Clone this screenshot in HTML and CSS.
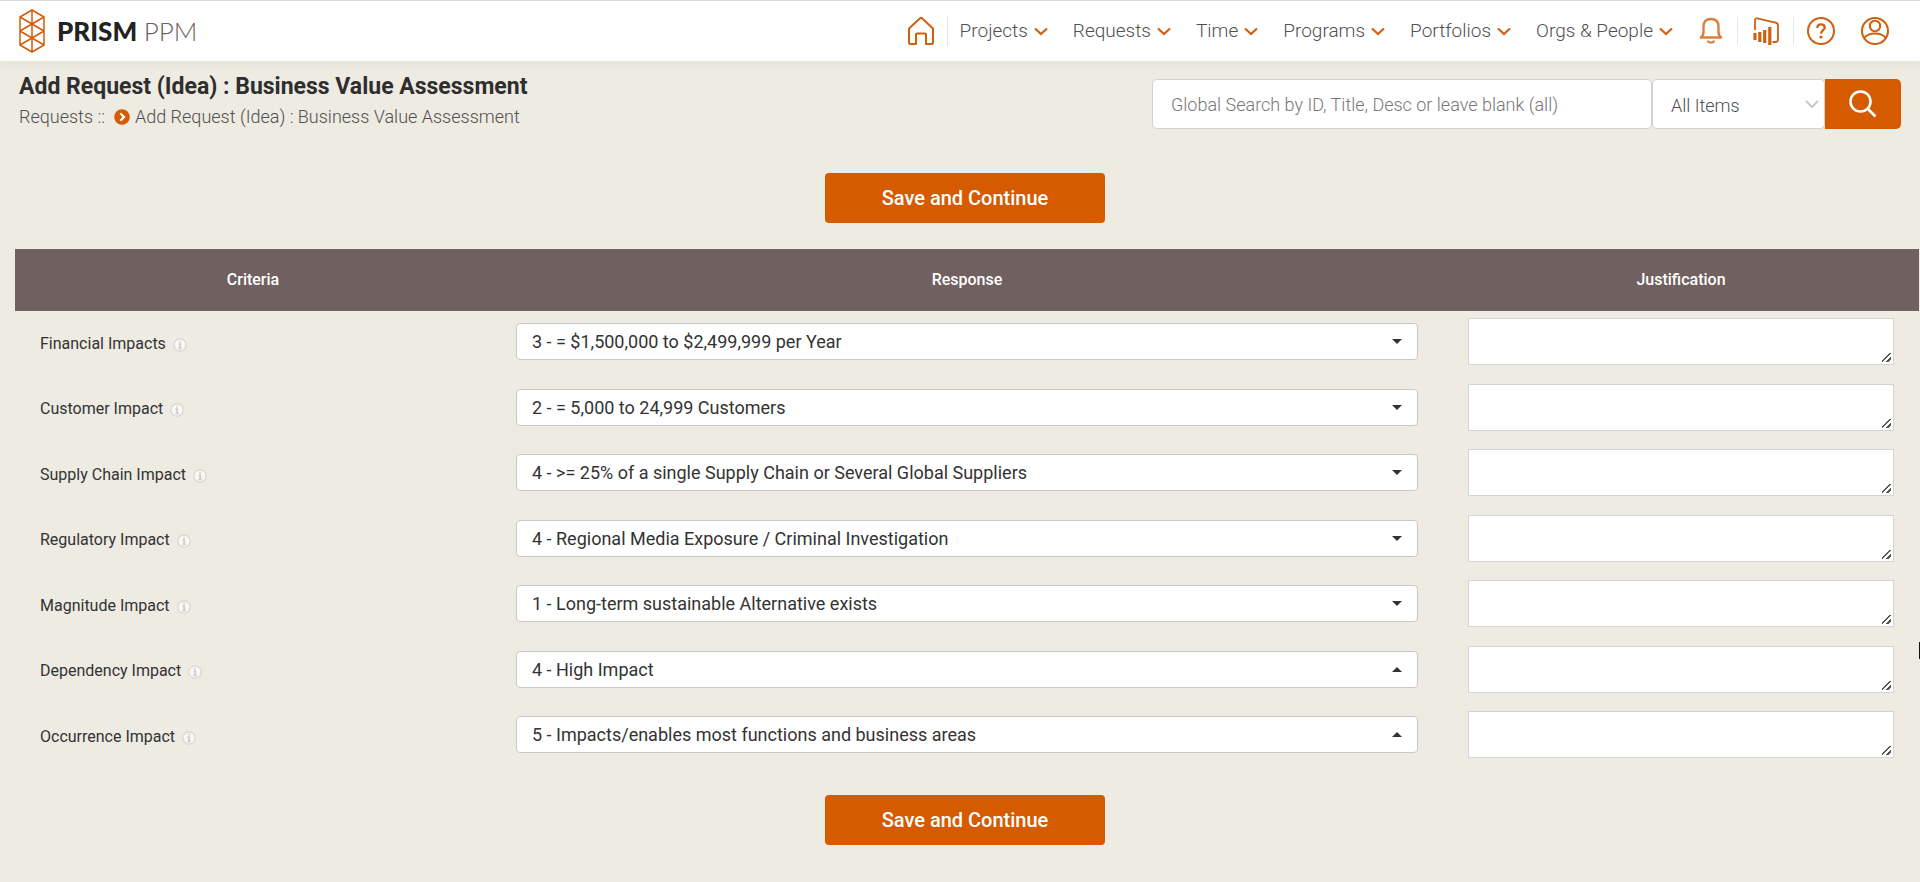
FILE: index.html
```html
<!DOCTYPE html>
<html lang="en">
<head>
<meta charset="utf-8">
<title>Add Request (Idea) : Business Value Assessment</title>
<link rel="stylesheet" href="styles.css">
</head>
<body>
<svg class="symbols" aria-hidden="true">
  <symbol id="chev" viewBox="0 0 14 9"><path d="M1 1.500l6 5.500 6-5.500" fill="none" stroke="currentColor" stroke-width="2.200"/></symbol>
  <symbol id="info" viewBox="0 0 14 14"><circle cx="7" cy="7" r="6.200" fill="#f8f7f4" stroke="#d6d5d1" stroke-width="1.200"/><path d="M7 2.900v1.700M5.600 6.100h1.600v4M5.400 10.400h3.400" fill="none" stroke="#cfcecb" stroke-width="1.700"/></symbol>
  <symbol id="down" viewBox="0 0 10 5"><path d="M0 0h10L5 5z" fill="#333"/></symbol>
  <symbol id="up" viewBox="0 0 10 5"><path d="M0 5h10L5 0z" fill="#333"/></symbol>
</svg>

<header class="topbar">
  <a class="brand" href="#">
    <svg class="brand-mark" viewBox="0 0 26 44" fill="none" stroke="#d55a0a" stroke-width="1.500" stroke-linejoin="round">
      <path d="M13 1l12 7v28l-12 7-12-7V8zM13 1v42M1 8l24 14L1 36M25 8L1 22l24 14"/>
    </svg>
    <span class="brand-text"><b>PRISM</b> <span class="brand-light">PPM</span></span>
  </a>
  <nav class="nav">
    <a class="nav-home" href="#" aria-label="Home">
      <svg width="28" height="30" viewBox="0 0 28 30" fill="none" stroke="currentColor" stroke-width="2" stroke-linejoin="round"><path d="M2 12.500L12.800 2.400q1.200-1 2.400 0L26 12.500V26.500q0 1.500-1.500 1.500H19V18.500q0-1-1-1h-8q-1 0-1 1V28H3.500Q2 28 2 26.500z"/></svg>
    </a>
    <ul class="menu">
      <li><a href="#">Projects<svg class="chev"><use href="#chev"/></svg></a></li>
      <li><a href="#">Requests<svg class="chev"><use href="#chev"/></svg></a></li>
      <li><a href="#">Time<svg class="chev"><use href="#chev"/></svg></a></li>
      <li><a href="#">Programs<svg class="chev"><use href="#chev"/></svg></a></li>
      <li><a href="#">Portfolios<svg class="chev"><use href="#chev"/></svg></a></li>
      <li><a href="#">Orgs &amp; People<svg class="chev"><use href="#chev"/></svg></a></li>
    </ul>
    <div class="tools">
      <a class="tool tool-bell" href="#" aria-label="Notifications">
        <svg width="24" height="28" viewBox="0 0 24 28" fill="none" stroke="currentColor" stroke-width="2.400"><path d="M1.800 20.500q2.700-2 2.700-5.500V9.500Q4.500 2 12 2t7.500 7.500V15q0 3.500 2.700 5.500z" stroke-linejoin="round"/><path d="M8.800 23.600q.8 2 3.200 2t3.200-2"/></svg>
      </a>
      <a class="tool tool-chart" href="#" aria-label="Reports">
        <svg width="26" height="28" viewBox="0 0 26 28" fill="none" stroke="currentColor" stroke-width="1.800"><path d="M2 13V3.200Q2 1 4.200 1.400L22.500 5.600Q25 6.200 25 8.300V22.500Q25 25 22.500 25H19.500"/><path d="M2 16v7M6.800 15v10M11.700 13v13M16.800 10v18" stroke-width="3.200"/></svg>
      </a>
      <a class="tool tool-help" href="#" aria-label="Help">
        <svg width="30" height="30" viewBox="0 0 30 30" fill="none" stroke="currentColor" stroke-width="2"><circle cx="15" cy="15" r="13"/><path d="M11.300 12Q11.300 8.300 15 8.300T18.700 11.500C18.700 14 15 14.200 15 17.700" stroke-width="2.300"/><circle cx="15" cy="21" r="1.600" fill="currentColor" stroke="none"/></svg>
      </a>
      <a class="tool" href="#" aria-label="Account">
        <svg width="30" height="30" viewBox="0 0 30 30" fill="none" stroke="currentColor" stroke-width="2"><circle cx="15" cy="15" r="13"/><circle cx="15" cy="10" r="5.200"/><path d="M4 22Q8 17.500 15 17.500T26 22"/></svg>
      </a>
    </div>
  </nav>
</header>

<main>
  <div class="pagehead">
    <div class="titles">
      <h1>Add Request (Idea) : Business Value Assessment</h1>
      <div class="crumbs">
        <a href="#">Requests ::</a>
        <svg width="16" height="16" viewBox="0 0 16 16"><circle cx="8" cy="8" r="7.800" fill="#d55a00"/><path d="M6.300 4.200L10 8l-3.700 3.800" fill="none" stroke="#fff" stroke-width="2.200"/></svg>
        <span>Add Request (Idea) : Business Value Assessment</span>
      </div>
    </div>
    <form class="search">
      <input class="search-text" type="text" aria-label="Global search" placeholder="Global Search by ID, Title, Desc or leave blank (all)">
      <span class="search-scope">
        <select aria-label="Search scope"><option>All Items</option></select>
        <svg class="scope-chev" viewBox="0 0 14 8"><path d="M1 1l6 6 6-6" fill="none" stroke="#c4c4c4" stroke-width="1.800"/></svg>
      </span>
      <button class="search-go" type="button" aria-label="Search">
        <svg width="28" height="28" viewBox="0 0 28 28" fill="none" stroke="#fff" stroke-width="2.600"><circle cx="11.500" cy="11.500" r="10"/><path d="M18.500 18.500l8 8"/></svg>
      </button>
    </form>
  </div>

  <div class="actions"><button class="save" type="button">Save and Continue</button></div>

  <table class="criteria">
    <thead>
      <tr><th class="narrow">Criteria</th><th>Response</th><th class="narrow">Justification</th></tr>
    </thead>
    <tbody>
      <tr>
        <td><label for="r1">Financial Impacts</label><svg class="info"><use href="#info"/></svg></td>
        <td><span class="pick"><select id="r1"><option>3 - = $1,500,000 to $2,499,999 per Year</option></select><svg class="arrow"><use href="#down"/></svg></span></td>
        <td><textarea aria-label="Financial Impacts justification"></textarea></td>
      </tr>
      <tr>
        <td><label for="r2">Customer Impact</label><svg class="info"><use href="#info"/></svg></td>
        <td><span class="pick"><select id="r2"><option>2 - = 5,000 to 24,999 Customers</option></select><svg class="arrow"><use href="#down"/></svg></span></td>
        <td><textarea aria-label="Customer Impact justification"></textarea></td>
      </tr>
      <tr>
        <td><label for="r3">Supply Chain Impact</label><svg class="info"><use href="#info"/></svg></td>
        <td><span class="pick"><select id="r3"><option>4 - &gt;= 25% of a single Supply Chain or Several Global Suppliers</option></select><svg class="arrow"><use href="#down"/></svg></span></td>
        <td><textarea aria-label="Supply Chain Impact justification"></textarea></td>
      </tr>
      <tr>
        <td><label for="r4">Regulatory Impact</label><svg class="info"><use href="#info"/></svg></td>
        <td><span class="pick"><select id="r4"><option>4 - Regional Media Exposure / Criminal Investigation</option></select><svg class="arrow"><use href="#down"/></svg></span></td>
        <td><textarea aria-label="Regulatory Impact justification"></textarea></td>
      </tr>
      <tr>
        <td><label for="r5">Magnitude Impact</label><svg class="info"><use href="#info"/></svg></td>
        <td><span class="pick"><select id="r5"><option>1 - Long-term sustainable Alternative exists</option></select><svg class="arrow"><use href="#down"/></svg></span></td>
        <td><textarea aria-label="Magnitude Impact justification"></textarea></td>
      </tr>
      <tr>
        <td><label for="r6">Dependency Impact</label><svg class="info"><use href="#info"/></svg></td>
        <td><span class="pick"><select id="r6"><option>4 - High Impact</option></select><svg class="arrow"><use href="#up"/></svg></span></td>
        <td><textarea aria-label="Dependency Impact justification"></textarea></td>
      </tr>
      <tr>
        <td><label for="r7">Occurrence Impact</label><svg class="info"><use href="#info"/></svg></td>
        <td><span class="pick"><select id="r7"><option>5 - Impacts/enables most functions and business areas</option></select><svg class="arrow"><use href="#up"/></svg></span></td>
        <td><textarea aria-label="Occurrence Impact justification"></textarea></td>
      </tr>
    </tbody>
  </table>

  <div class="actions actions-end"><button class="save" type="button">Save and Continue</button></div>
</main>
<div class="edge-mark"></div>
</body>
</html>
```
FILE: styles.css
```css
* { box-sizing: border-box; }
body {
  margin: 0;
  background: #eeebe3;
  color: #333;
  font-family: Roboto, "Liberation Sans", sans-serif;
  font-size: 16px;
}
a { color: inherit; text-decoration: none; }
svg { display: block; flex: none; }
button, input, select, textarea { font: inherit; color: inherit; margin: 0; }
.symbols { position: absolute; width: 0; height: 0; }

.topbar {
  display: flex;
  align-items: center;
  justify-content: space-between;
  height: 61px;
  padding: 0 30px 0 19px;
  background: #fff;
  border-top: 1px solid #dcdcdc;
  box-shadow: 0 2px 12px #e2e2d0;
}
.brand { display: flex; align-items: center; gap: 12px; }
.brand-mark { width: 26px; height: 44px; }
.brand-text { font-family: Lato, sans-serif; font-size: 26px; line-height: 32px; color: #222; }
.brand-text b { font-weight: 900; }
.brand-light { font-weight: 300; color: #6f6060; }

.nav { display: flex; align-items: center; color: #d0600f; }
.nav-home { padding-right: 12px; border-right: 1px solid #e6e6e6; }
.menu {
  display: flex;
  gap: 25px;
  margin: 0;
  padding: 0 0 0 12px;
  list-style: none;
  font-size: 19px;
  font-weight: 300;
  line-height: 28px;
}
.menu a { display: flex; align-items: center; gap: 6px; color: #505050; }
.chev { width: 14px; height: 9px; color: #d0600f; }
.tools { display: flex; align-items: center; padding-left: 26px; }
.tool { display: flex; align-items: center; height: 28px; }
.tool-bell { padding-right: 14px; color: #db8040; }
.tool-chart { padding: 0 14px 0 15px; border: solid #e6e6e6; border-width: 0 1px; }
.tool-help { padding: 0 24px 0 12px; }

.pagehead { display: flex; justify-content: space-between; padding: 11px 19px 0; }
.titles { padding-top: 1px; }
h1 { margin: 0; font-size: 23px; line-height: 28px; font-weight: 700; color: #2e2e2e; }
.crumbs { display: flex; align-items: center; font-size: 18px; font-weight: 300; line-height: 32px; color: #505050; }
.crumbs svg { margin: 0 5px 0 9px; }
.search { display: flex; width: 749px; height: 50px; margin-top: 7px; font-size: 18px; font-weight: 300; color: #505050; }
.search-text {
  flex: 1;
  min-width: 0;
  padding: 0 18px;
  background: #fff;
  border: 1px solid #d2d2d2;
  border-radius: 5px;
}
.search-text::placeholder { color: #777; opacity: 1; }
.search-scope { display: grid; align-items: center; width: 173px; }
.search-scope select {
  grid-area: 1 / 1;
  height: 50px;
  padding: 2px 18px 0;
  background: #fff;
  border: 1px solid #d2d2d2;
  border-radius: 5px;
  appearance: none;
}
.scope-chev { grid-area: 1 / 1; justify-self: end; width: 14px; height: 8px; margin-right: 6px; pointer-events: none; }
.search-go {
  display: flex;
  align-items: center;
  justify-content: center;
  width: 76px;
  padding: 0;
  background: #d55a00;
  border: 0;
  border-radius: 0 5px 5px 0;
}

.actions { display: flex; justify-content: center; padding: 40px 0 26px 10px; }
.actions-end { padding-top: 26px; }
.save {
  width: 280px;
  height: 50px;
  background: #d55a00;
  color: #fff;
  border: 0;
  border-radius: 4px;
  font-size: 20px;
  font-weight: 500;
}

.criteria { width: calc(100% - 16px); margin: 0 1px 0 15px; border-collapse: collapse; table-layout: fixed; }
.criteria th { height: 62px; padding: 0 0 2px; background: #706060; color: #fff; font-size: 16px; font-weight: 500; }
.narrow { width: 25%; }
.criteria td { height: 65px; padding: 0 25px 4px; vertical-align: middle; }
.criteria tr:nth-child(even) td { height: 66px; }
.criteria td:first-child { font-size: 16px; line-height: 24px; padding-bottom: 0; }
.info { display: inline-block; width: 14px; height: 14px; margin-left: 7px; vertical-align: -3px; }
.pick { display: grid; align-items: center; }
.pick select {
  grid-area: 1 / 1;
  width: 100%;
  height: 37px;
  padding: 0 15px;
  background: #fff;
  border: 1px solid #c8c8c8;
  border-radius: 4px;
  font-size: 18px;
  appearance: none;
}
.arrow { grid-area: 1 / 1; justify-self: end; width: 10px; height: 5px; margin-right: 16px; pointer-events: none; }
.criteria textarea {
  display: block;
  width: 100%;
  height: 47px;
  padding: 4px;
  background: #fff;
  border: 1px solid #d3d4da;
  resize: both;
}
.criteria textarea::-webkit-resizer {
  background: linear-gradient(135deg, transparent 44%, #555 44% 55%, transparent 55% 72%, #555 72% 84%, transparent 84%) 4px 4px / 9px 9px no-repeat;
}
.edge-mark { position: absolute; right: 0; top: 642px; width: 1px; height: 17px; background: #111; }
```
